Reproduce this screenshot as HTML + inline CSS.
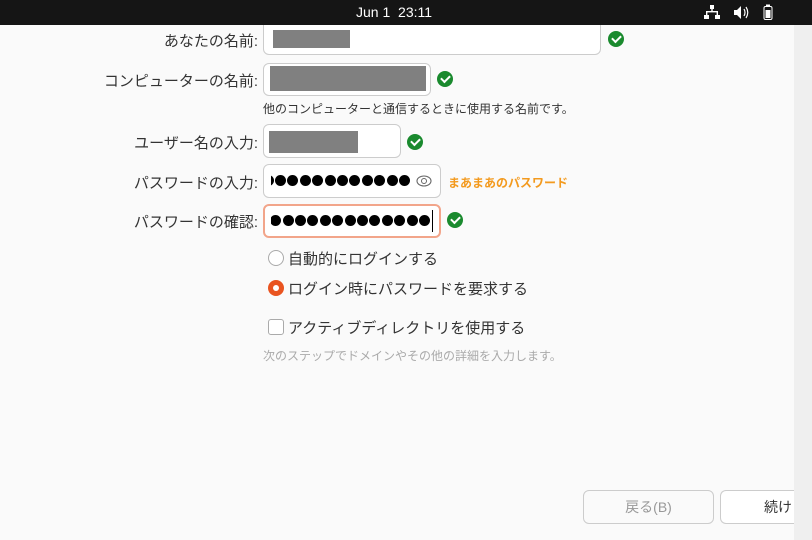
<!DOCTYPE html>
<html><head><meta charset="utf-8"><style>
*{box-sizing:border-box;margin:0;padding:0}
body{width:812px;height:540px;overflow:hidden;background:#fafafa;font-family:"Liberation Sans","Noto Sans CJK JP",sans-serif;color:#333;position:relative}
.top{position:absolute;left:0;top:0;width:812px;height:25px;background:#151515;color:#fff;font-size:14px;z-index:10}
.strip{position:absolute;left:794px;top:25px;width:18px;height:515px;background:#efefef}
.lab{position:absolute;right:554px;font-size:15px;color:#333;white-space:nowrap}
.f{position:absolute;background:#fff;border:1px solid #ccc;border-radius:6px}
.g{position:absolute;background:#808080}
.ck{position:absolute;width:16px;height:16px;border-radius:50%;background:#1a8a2e}
.ck:after{content:"";position:absolute;left:4px;top:4px;width:7px;height:4px;border-left:2px solid #fff;border-bottom:2px solid #fff;transform:rotate(-45deg)}
.dots{position:absolute;height:12px;overflow:hidden;display:flex;justify-content:flex-end}
.dots i{flex:none;width:11px;height:11px;border-radius:50%;background:#000;margin-left:1.4px}
.t{position:absolute;font-size:15px;white-space:nowrap}
</style></head><body>
<div class="top"><span style="position:absolute;left:356px;top:4px">Jun 1&nbsp;&nbsp;23:11</span>
<svg style="position:absolute;left:704px;top:5px" width="16" height="15" viewBox="0 0 16 15" fill="#fff"><rect x="6" y="0" width="4" height="4"/><rect x="7.3" y="4" width="1.4" height="3"/><rect x="2" y="6" width="12" height="1.4"/><rect x="2" y="6" width="1.4" height="4"/><rect x="12.6" y="6" width="1.4" height="4"/><rect x="0" y="10" width="5" height="4"/><rect x="11" y="10" width="5" height="4"/></svg>
<svg style="position:absolute;left:733px;top:5px" width="16" height="15" viewBox="0 0 16 15"><path d="M1 5h3l4-4v13l-4-4H1z" fill="#fff"/><path d="M11 4q2 3.5 0 7M13 2q3.5 5.5 0 11" stroke="#fff" fill="none" stroke-width="1.2"/></svg>
<svg style="position:absolute;left:763px;top:4px" width="10" height="16" viewBox="0 0 10 16"><rect x="3" y="0.5" width="4" height="2" fill="#fff"/><rect x="1" y="2.5" width="8" height="13" rx="1.5" fill="none" stroke="#fff"/><rect x="2.5" y="6" width="5" height="8" fill="#fff"/></svg>
</div>
<div class="strip"></div>

<div class="lab" style="top:30px">あなたの名前:</div>
<div class="f" style="left:263px;top:18px;width:338px;height:37px"></div>
<div class="g" style="left:273px;top:30px;width:77px;height:18px"></div>
<div class="ck" style="left:608px;top:31px"></div>

<div class="lab" style="top:70px">コンピューターの名前:</div>
<div class="f" style="left:263px;top:63px;width:168px;height:33px"></div>
<div class="g" style="left:270px;top:66px;width:156px;height:25px"></div>
<div class="ck" style="left:437px;top:71px"></div>
<div style="position:absolute;left:263px;top:100px;font-size:12px;color:#333">他のコンピューターと通信するときに使用する名前です。</div>

<div class="lab" style="top:132px">ユーザー名の入力:</div>
<div class="f" style="left:263px;top:124px;width:138px;height:34px"></div>
<div class="g" style="left:269px;top:131px;width:89px;height:22px"></div>
<div class="ck" style="left:407px;top:134px"></div>

<div class="lab" style="top:172px">パスワードの入力:</div>
<div class="f" style="left:263px;top:164px;width:178px;height:34px"></div>
<div class="dots" style="left:271px;top:175px;width:139px"><i></i><i></i><i></i><i></i><i></i><i></i><i></i><i></i><i></i><i></i><i></i><i></i></div>
<svg style="position:absolute;left:416px;top:174px" width="16" height="14" viewBox="0 0 16 14"><ellipse cx="8" cy="7" rx="7" ry="5" fill="none" stroke="#666" stroke-width="1.1"/><circle cx="8" cy="7" r="2.5" fill="none" stroke="#666"/></svg>
<div style="position:absolute;left:448px;top:174px;font-size:12px;font-weight:bold;color:#f39a1e">まあまあのパスワード</div>

<div class="lab" style="top:211px">パスワードの確認:</div>
<div class="f" style="left:263px;top:204px;width:178px;height:34px;border:2px solid #f2a58a"></div>
<div class="dots" style="left:271px;top:215px;width:159px"><i></i><i></i><i></i><i></i><i></i><i></i><i></i><i></i><i></i><i></i><i></i><i></i><i></i><i></i></div>
<div style="position:absolute;left:432px;top:210px;width:1px;height:22px;background:#000"></div>
<div class="ck" style="left:447px;top:212px"></div>

<div style="position:absolute;left:268px;top:250px;width:16px;height:16px;border:1px solid #aaa;border-radius:50%;background:#fff"></div>
<div class="t" style="left:288px;top:248px">自動的にログインする</div>
<div style="position:absolute;left:268px;top:280px;width:16px;height:16px;border-radius:50%;background:#e95420"><div style="position:absolute;left:5px;top:5px;width:6px;height:6px;border-radius:50%;background:#fff"></div></div>
<div class="t" style="left:288px;top:278px">ログイン時にパスワードを要求する</div>
<div style="position:absolute;left:268px;top:319px;width:16px;height:16px;border:1px solid #aaa;border-radius:3px;background:#fff"></div>
<div class="t" style="left:288px;top:317px">アクティブディレクトリを使用する</div>
<div style="position:absolute;left:263px;top:347px;font-size:12px;color:#aaa">次のステップでドメインやその他の詳細を入力します。</div>

<div style="position:absolute;left:583px;top:490px;width:131px;height:34px;border:1px solid #ccc;border-radius:6px;background:#fafafa;color:#999;font-size:14px;text-align:center;line-height:32px">戻る(B)</div>
<div style="position:absolute;left:720px;top:490px;width:74px;height:34px;border:1px solid #ccc;border-right:none;border-radius:6px 0 0 6px;background:#fff;font-size:14px;line-height:32px;padding-left:43px;overflow:hidden;white-space:nowrap">続け</div>
</body></html>
